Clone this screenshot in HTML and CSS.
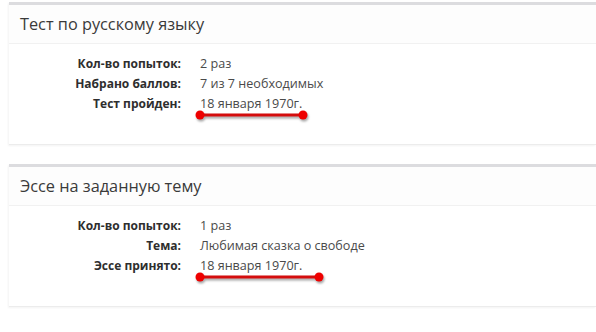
FILE: index.html
```html
<!DOCTYPE html>
<html lang="ru">
<head>
    <meta charset="UTF-8">
    <title>Результаты</title>
    <link rel="stylesheet" href="styles.css">
</head>
<body>
  <div class="card">
    <div class="card-head">Тест по русскому языку</div>
    <div class="card-body">
      <div class="info">
        <div class="lbl">Кол-во попыток:</div><div class="val">2 раз</div>
        <div class="lbl">Набрано баллов:</div><div class="val">7 из 7 необходимых</div>
        <div class="lbl">Тест пройден:</div><div class="val">18 января 1970г.</div>
      </div>
      <svg class="mark" width="120" height="14" viewBox="0 0 120 14">
        <line x1="5" y1="6" x2="108" y2="6" stroke="#d40d0d" stroke-width="3" stroke-linecap="round" />
        <circle cx="5" cy="6" r="4.5" fill="#ee0000" />
        <circle cx="108" cy="6" r="4.5" fill="#ee0000" />
      </svg>
    </div>
  </div>

  <div class="card">
    <div class="card-head">Эссе на заданную тему</div>
    <div class="card-body">
      <div class="info">
        <div class="lbl">Кол-во попыток:</div><div class="val">1 раз</div>
        <div class="lbl">Тема:</div><div class="val">Любимая сказка о свободе</div>
        <div class="lbl">Эссе принято:</div><div class="val">18 января 1970г.</div>
      </div>
      <svg class="mark" width="130" height="14" viewBox="0 0 130 14">
        <line x1="5" y1="6" x2="124" y2="6" stroke="#d40d0d" stroke-width="3" stroke-linecap="round" />
        <circle cx="5" cy="6" r="4.5" fill="#ee0000" />
        <circle cx="124" cy="6" r="4.5" fill="#ee0000" />
      </svg>
    </div>
  </div>
</body>
</html>
```

FILE: styles.css
```css
html,body,div{margin:0;padding:0;}
html,body{
  background-color: #fff;
  font-family: "Open Sans", "DejaVu Sans", sans-serif;
  color: #444;
}
body{
  padding: 2px 0 0 9px;
}
.card{
  border-top: 3px solid #dcdcdf;
  border-bottom: 1px solid #ececec;
  box-shadow: -1px 1px 2px rgba(0,0,0,0.05);
  margin-bottom: 19px;
  background: #fff;
}
.card-head{
  height: 38px;
  line-height: 38px;
  font-size: 16.3px;
  padding-left: 11px;
  color: #3a3a3a;
  background: #fdfdfd;
  border-bottom: 1px solid #f1f1f1;
}
.card-body{
  position: relative;
  padding: 10px 0 30px;
}
.info{
  display: grid;
  grid-template-columns: 172px auto;
  column-gap: 19px;
  line-height: 20px;
}
.lbl{
  text-align: right;
  font-weight: bold;
  font-size: 12px;
  color: #2e2e2e;
}
.val{
  font-size: 12.6px;
  color: #4a4a4a;
}
.mark{
  position: absolute;
  left: 186px;
  top: 65px;
  overflow: visible;
  filter: drop-shadow(1px 2px 1px rgba(0,0,0,0.35));
}
```
